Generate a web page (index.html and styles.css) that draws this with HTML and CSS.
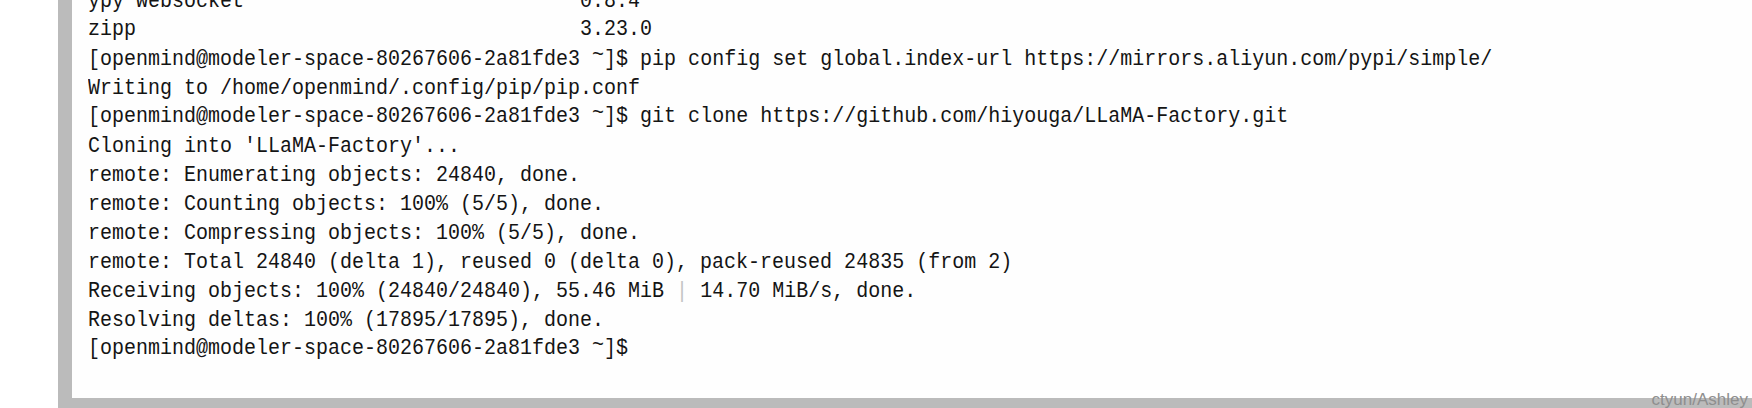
FILE: index.html
```html
<!DOCTYPE html>
<html>
<head>
<meta charset="utf-8">
<link rel="stylesheet" href="styles.css">
</head>
<body>
<div class="page">
  <div class="frame">
    <div class="term">
      <div class="ln">ypy websocket                            0.8.4</div>
      <div class="ln">zipp                                     3.23.0</div>
      <div class="ln"><span>[openmind@modeler-space-80267606-2a81fde3 </span><span class="tl">~</span><span>]$ pip config set global.index-url https://mirrors.aliyun.com/pypi/simple/</span></div>
      <div class="ln">Writing to /home/openmind/.config/pip/pip.conf</div>
      <div class="ln"><span>[openmind@modeler-space-80267606-2a81fde3 </span><span class="tl">~</span><span>]$ git clone https://github.com/hiyouga/LLaMA-Factory.git</span></div>
      <div class="ln">Cloning into 'LLaMA-Factory'...</div>
      <div class="ln">remote: Enumerating objects: 24840, done.</div>
      <div class="ln">remote: Counting objects: 100% (5/5), done.</div>
      <div class="ln">remote: Compressing objects: 100% (5/5), done.</div>
      <div class="ln">remote: Total 24840 (delta 1), reused 0 (delta 0), pack-reused 24835 (from 2)</div>
      <div class="ln"><span>Receiving objects: 100% (24840/24840), 55.46 MiB </span><span class="bar">|</span><span> 14.70 MiB/s, done.</span></div>
      <div class="ln">Resolving deltas: 100% (17895/17895), done.</div>
      <div class="ln"><span>[openmind@modeler-space-80267606-2a81fde3 </span><span class="tl">~</span><span>]$</span></div>
    </div>
  </div>
  <div class="mark">ctyun/Ashley</div>
</div>
</body>
</html>
```
FILE: styles.css
```css
html, body {
  margin: 0;
  padding: 0;
  background: #ffffff;
}
.page {
  position: relative;
  width: 1752px;
  height: 408px;
  padding-left: 58px;
  box-sizing: border-box;
  overflow: hidden;
}
.frame {
  height: 408px;
  box-sizing: border-box;
  border-left: 14px solid #bbbbbb;
  border-bottom: 10px solid #bbbbbb;
  padding-left: 16px;
  overflow: hidden;
  background: #fefefe;
}
.term {
  margin-top: -13px;
  font-family: "Liberation Mono", monospace;
  font-size: 20px;
  color: #141414;
  transform: scaleY(1.1);
  transform-origin: top left;
}
.ln {
  height: 26.364px;
  line-height: 26.364px;
  white-space: pre;
}
.tl {
  display: inline-block;
  line-height: 10px;
  transform: translateY(-3.4px);
}
.bar {
  color: #c4c4c4;
}
.mark {
  position: absolute;
  right: 4px;
  bottom: 0;
  font-family: "Liberation Sans", Arial, sans-serif;
  font-size: 17px;
  line-height: 17px;
  color: #8e8e8e;
}
```
